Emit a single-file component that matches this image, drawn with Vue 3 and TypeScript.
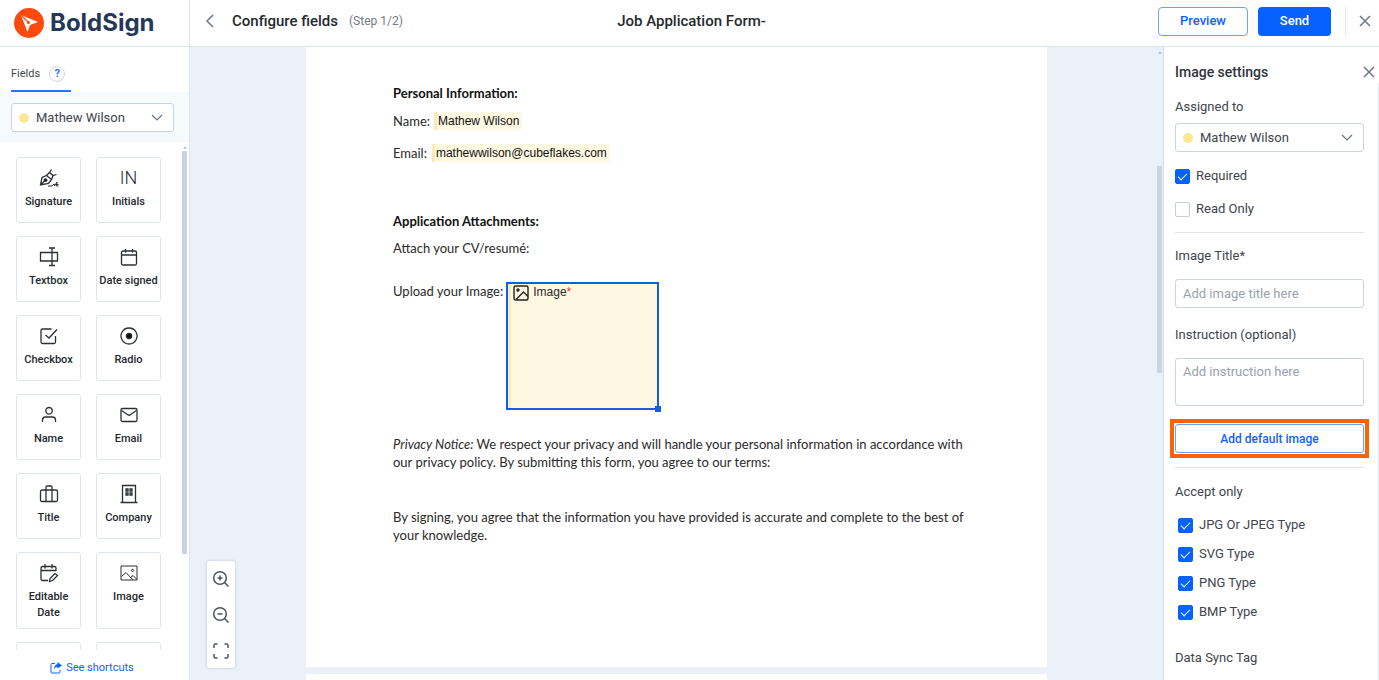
<script setup lang="ts">
import { ref } from 'vue'

type Shape = { d: string; fill?: boolean; thin?: boolean }
interface FieldItem {
  label: string
  shapes: Shape[]
  text?: string
}

const fields: FieldItem[] = [
  {
    label: 'Signature',
    shapes: [
      { d: 'M1.500 17 3 9.500 7.500 7.500 12.500 11.500 9.500 15.500ZM1.500 17 6 12.500' },
      { d: 'M7.500 7.500 10.500 4.500 14 7.500 17.500 6.500M12.500 11.500 14 7.500M10.500 4.500 12.500 1.500' },
      { d: 'M6.500 10.800a1.300 1.300 0 1 0 .1 0Z', fill: true },
      { d: 'M9 18H13L15 16 15.500 18 18 14 17.500 18H19.500M16 16.500H19.500', thin: true },
    ],
  },
  { label: 'Initials', shapes: [], text: 'IN' },
  {
    label: 'Textbox',
    shapes: [{ d: 'M1.500 5.500H18.500V14H1.500Z' }, { d: 'M10 1H16M13 1V18.500M10 18.500H16' }],
  },
  {
    label: 'Date signed',
    shapes: [{ d: 'M4 4H16a1.500 1.500 0 0 1 1.500 1.500V16.500a1.500 1.500 0 0 1-1.500 1.500H4a1.500 1.500 0 0 1-1.500-1.500V5.500A1.500 1.500 0 0 1 4 4Z' }, { d: 'M2.500 8H17.500M6.500 2V5.500M13.500 2V5.500' }],
  },
  {
    label: 'Checkbox',
    shapes: [{ d: 'M12.500 3H3.500A1.500 1.500 0 0 0 2 4.500V16a1.500 1.500 0 0 0 1.500 1.500H15a1.500 1.500 0 0 0 1.500-1.500V10' }, { d: 'M6.500 9 10 12 18 3.500' }],
  },
  {
    label: 'Radio',
    shapes: [{ d: 'M10 2a8 8 0 1 0 .1 0Z' }, { d: 'M10 7.300a2.700 2.700 0 1 0 .1 0Z', fill: true }],
  },
  {
    label: 'Name',
    shapes: [{ d: 'M10 2.500a3.300 3.300 0 1 0 .1 0Z' }, { d: 'M3.500 17V15a3 3 0 0 1 3-3H13.500a3 3 0 0 1 3 3V17' }],
  },
  {
    label: 'Email',
    shapes: [{ d: 'M3.500 3.500H16.500A1.500 1.500 0 0 1 18 5V15A1.500 1.500 0 0 1 16.500 16.500H3.500A1.500 1.500 0 0 1 2 15V5A1.500 1.500 0 0 1 3.500 3.500Z' }, { d: 'M2.500 5.500 10 10.500 17.500 5.500' }],
  },
  {
    label: 'Title',
    shapes: [{ d: 'M3 6H17A1.500 1.500 0 0 1 18.500 7.500V16A1.500 1.500 0 0 1 17 17.500H3A1.500 1.500 0 0 1 1.500 16V7.500A1.500 1.500 0 0 1 3 6Z' }, { d: 'M7 17.500V3A1 1 0 0 1 8 2H12A1 1 0 0 1 13 3V17.500' }],
  },
  {
    label: 'Company',
    shapes: [{ d: 'M3.500 18V1.500H16.500V18M1.500 18.500H18.500' }, { d: 'M7 5H9V7H7ZM11 5H13V7H11ZM7 9H9V11H7ZM11 9H13V11H11Z' }],
  },
  {
    label: 'Editable Date',
    shapes: [{ d: 'M9 17.500H3.500A1.500 1.500 0 0 1 2 16V5A1.500 1.500 0 0 1 3.500 3.500H15.500A1.500 1.500 0 0 1 17 5V8M2 7.500H17M6 1V5.500M13 1V5.500' }, { d: 'M10.500 18.500 11 15.500 16 10.500 18.500 12.500 13.500 17.500Z' }],
  },
  {
    label: 'Image',
    shapes: [{ d: 'M2 3H18V17H2ZM2.500 13.500 7 9.500 14 17M11.500 14.500 14 12.500 18 16.500', thin: true }, { d: 'M13.500 6.200a1.200 1.200 0 1 0 .1 0Z', thin: true }],
  },
]

const signers = ['Mathew Wilson']
const fieldSigner = ref(signers[0])
const assignee = ref(signers[0])
const required = ref(true)
const readOnly = ref(false)
const imageTitle = ref('')
const instruction = ref('')
const types = ref([
  { id: 'jpg', label: 'JPG Or JPEG Type', on: true },
  { id: 'svg', label: 'SVG Type', on: true },
  { id: 'png', label: 'PNG Type', on: true },
  { id: 'bmp', label: 'BMP Type', on: true },
])
</script>

<template>
  <div class="app">
    <header class="topbar">
      <div class="topbar-left">
        <a class="brand" href="#" aria-label="BoldSign">
          <svg width="32" height="32" viewBox="0 0 32 32" aria-hidden="true">
            <circle cx="16" cy="16" r="15" fill="#ff4a0d" />
            <path d="M8 8 25 15 17 18 14.500 25Z" fill="#fff" />
            <path d="M8 8 15.500 15.500" stroke="#ff4a0d" stroke-width="1.300" />
            <circle cx="15.500" cy="15.500" r="1.500" fill="#ff4a0d" />
          </svg>
          <span>BoldSign</span>
        </a>
        <button class="icon-btn" type="button" aria-label="Back">
          <svg width="12" height="16" viewBox="0 0 12 16"><path d="M9 2 3 8 9 14" /></svg>
        </button>
        <h1>Configure fields</h1>
        <span class="step">(Step 1/2)</span>
      </div>
      <div class="doc-name">Job Application Form-</div>
      <div class="topbar-right">
        <button class="btn outline" type="button">Preview</button>
        <button class="btn solid" type="button">Send</button>
        <span class="divider"></span>
        <button class="icon-btn" type="button" aria-label="Close">
          <svg width="14" height="14" viewBox="0 0 14 14"><path d="M2 2 12 12M12 2 2 12" /></svg>
        </button>
      </div>
    </header>

    <div class="body">
      <aside class="sidebar">
        <div class="tabs">
          <div class="tab">
            Fields
            <button class="help" type="button" aria-label="Help">?</button>
          </div>
        </div>
        <div class="signer">
          <div class="picker">
            <i class="dot"></i>
            <select v-model="fieldSigner" aria-label="Signer">
              <option v-for="s in signers" :key="s">{{ s }}</option>
            </select>
            <svg class="chev" width="12" height="8" viewBox="0 0 12 8"><path d="M1 1 6 6 11 1" /></svg>
          </div>
        </div>
        <div class="palette">
          <div class="cards">
            <button v-for="f in fields" :key="f.label" class="card" type="button">
              <span v-if="f.text" class="glyph">{{ f.text }}</span>
              <svg v-else width="20" height="20" viewBox="0 0 20 20" aria-hidden="true">
                <path v-for="(s, i) in f.shapes" :key="i" :d="s.d" :class="{ filled: s.fill, thin: s.thin }" />
              </svg>
              <span class="card-label">{{ f.label }}</span>
            </button>
            <div v-for="n in 2" :key="n" class="card"></div>
          </div>
          <div class="rail">
            <i class="arrow"></i>
            <i class="thumb"></i>
          </div>
        </div>
        <a class="shortcuts" href="#">
          <svg width="12" height="12" viewBox="0 0 12 12" aria-hidden="true">
            <path d="M5 1.500H2A1 1 0 0 0 1 2.500V10A1 1 0 0 0 2 11H9A1 1 0 0 0 10 10V8" fill="none" stroke="#0f62fe" />
            <path d="M7.500 0 12 3.500 7.500 6.500V4.800Q5 5 4 7.500 4 3 7.500 2Z" fill="#0f62fe" />
          </svg>
          See shortcuts
        </a>
      </aside>

      <main class="canvas">
        <div class="tools">
          <button type="button" aria-label="Zoom in">
            <svg width="18" height="18" viewBox="0 0 18 18"><circle cx="8" cy="8" r="6.300" /><path d="M12.500 12.500 16.500 16.500M5.500 8H10.500M8 5.500V10.500" /></svg>
          </button>
          <button type="button" aria-label="Zoom out">
            <svg width="18" height="18" viewBox="0 0 18 18"><circle cx="8" cy="8" r="6.300" /><path d="M12.500 12.500 16.500 16.500M5.500 8H10.500" /></svg>
          </button>
          <button type="button" aria-label="Fit to screen">
            <svg width="18" height="18" viewBox="0 0 18 18"><path d="M2 6V3.500A1.500 1.500 0 0 1 3.500 2H5.500M12.500 2H14.500A1.500 1.500 0 0 1 16 3.500V6M16 12V14.500A1.500 1.500 0 0 1 14.500 16H12.500M5.500 16H3.500A1.500 1.500 0 0 1 2 14.500V12" /></svg>
          </button>
        </div>
        <div class="pages">
          <article class="page first">
            <h2>Personal Information:</h2>
            <p class="row name"><span>Name:</span><span class="filled-field">Mathew Wilson</span></p>
            <p class="row email"><span>Email:</span><span class="filled-field">mathewwilson@cubeflakes.com</span></p>
            <h2 class="attachments">Application Attachments:</h2>
            <p class="attach">Attach your CV/resumé:</p>
            <div class="row upload">
              <span>Upload your Image:</span>
              <div class="image-field">
                <svg width="16" height="16" viewBox="0 0 16 16" aria-hidden="true">
                  <rect x="1" y="1" width="14" height="14" rx="1.500" />
                  <path d="M3 14.500 10.500 7 15 11.500" />
                  <circle cx="5" cy="5" r="1" />
                </svg>
                <span>Image<b>*</b></span>
                <i class="handle"></i>
              </div>
            </div>
            <p class="notice">
              <em>Privacy Notice:</em> We respect your privacy and will handle your personal information in accordance with<br />our
              privacy policy. By submitting this form, you agree to our terms:
            </p>
            <p class="signing">
              By signing, you agree that the information you have provided is accurate and complete to the best of<br />your
              knowledge.
            </p>
          </article>
          <article class="page next"></article>
        </div>
        <div class="rail main-rail">
          <i class="arrow"></i>
          <i class="thumb"></i>
        </div>
      </main>

      <aside class="settings">
        <div class="settings-head">
          <h2>Image settings</h2>
          <button class="icon-btn" type="button" aria-label="Close settings">
            <svg width="14" height="14" viewBox="0 0 14 14"><path d="M2 2 12 12M12 2 2 12" /></svg>
          </button>
        </div>
        <div class="settings-body">
          <label class="caption" for="assignee">Assigned to</label>
          <div class="picker">
            <i class="dot"></i>
            <select id="assignee" v-model="assignee">
              <option v-for="s in signers" :key="s">{{ s }}</option>
            </select>
            <svg class="chev" width="12" height="8" viewBox="0 0 12 8"><path d="M1 1 6 6 11 1" /></svg>
          </div>
          <div class="flags">
            <label class="check"><input v-model="required" type="checkbox" />Required</label>
            <label class="check"><input v-model="readOnly" type="checkbox" />Read Only</label>
          </div>
          <hr />
          <label class="caption" for="image-title">Image Title*</label>
          <input id="image-title" v-model="imageTitle" class="box" type="text" placeholder="Add image title here" />
          <label class="caption" for="instruction">Instruction (optional)</label>
          <textarea id="instruction" v-model="instruction" class="box area" placeholder="Add instruction here"></textarea>
          <div class="highlight">
            <button class="add-image" type="button">Add default image</button>
          </div>
          <hr />
          <div class="caption accept">Accept only</div>
          <div class="types">
            <label v-for="t in types" :key="t.id" class="check"><input v-model="t.on" type="checkbox" />{{ t.label }}</label>
          </div>
          <div class="caption sync">Data Sync Tag</div>
        </div>
      </aside>
    </div>
  </div>
</template>

<style>
body {
  margin: 0;
}
</style>

<style scoped>
* {
  box-sizing: border-box;
}
.app {
  height: 100vh;
  display: flex;
  flex-direction: column;
  overflow: hidden;
  font: 13px/18px Roboto, "Liberation Sans", sans-serif;
  color: #40454f;
  background: #fff;
}
h1, h2, p {
  margin: 0;
}
button, input, select, textarea {
  font: inherit;
  color: inherit;
}
button {
  cursor: pointer;
  padding: 0;
  border: 0;
  background: none;
}
svg {
  display: block;
  flex: none;
}

.topbar {
  flex: none;
  display: grid;
  grid-template-columns: 1fr auto 1fr;
  align-items: center;
  height: 47px;
  border-bottom: 1px solid #dfe5ec;
}
.topbar-left {
  display: flex;
  align-items: center;
  align-self: stretch;
  padding-bottom: 4px;
}
.brand {
  display: flex;
  align-items: center;
  gap: 5px;
  flex: none;
  width: 190px;
  height: 46px;
  margin-bottom: -4px;
  padding-left: 13px;
  border-right: 1px solid #dfe5ec;
  color: #253858;
  font: 700 24px/32px Inter, "Open Sans", sans-serif;
  text-decoration: none;
}
.icon-btn svg {
  fill: none;
  stroke: #6b7890;
  stroke-width: 1.500;
}
.topbar-left .icon-btn {
  margin-left: 14px;
}
h1 {
  margin-left: 16px;
  font-size: 15px;
  font-weight: 500;
  line-height: 20px;
  color: #24292f;
}
.step {
  margin-left: 11px;
  font-size: 12px;
  color: #757b85;
}
.doc-name {
  padding: 0 0 4px 4px;
  font-size: 15px;
  font-weight: 500;
  line-height: 20px;
  color: #24292f;
}
.topbar-right {
  display: flex;
  align-items: center;
  justify-content: flex-end;
  padding: 0 7px 4px 0;
}
.btn {
  height: 29px;
  border-radius: 4px;
  font-weight: 500;
  font-size: 13px;
}
.btn.outline {
  width: 90px;
  border: 1px solid #6c9ff8;
  color: #0f62fe;
}
.btn.solid {
  width: 73px;
  margin-left: 10px;
  background: #0562ff;
  color: #fff;
}
.divider {
  width: 1px;
  height: 28px;
  margin: 0 12px 0 14px;
  background: #dfe5ec;
}

.body {
  flex: 1;
  min-height: 0;
  display: flex;
}
.sidebar {
  flex: none;
  width: 190px;
  display: flex;
  flex-direction: column;
  border-right: 1px solid #dfe5ec;
}
.tabs {
  height: 45px;
  padding: 0 11px;
  display: flex;
}
.tab {
  display: flex;
  align-items: center;
  gap: 9px;
  width: 60px;
  padding-top: 10px;
  border-bottom: 2px solid #2b72f5;
  font-size: 11px;
}
.help {
  flex: none;
  width: 16px;
  height: 16px;
  border: 1px solid #d5d9df;
  border-radius: 50%;
  color: #1677ff;
  font-size: 11px;
  font-weight: 700;
  line-height: 14px;
}
.signer {
  padding: 11px 15px 10px 11px;
  background: #f6fafd;
}
.picker {
  display: flex;
  align-items: center;
  position: relative;
  height: 29px;
  padding-left: 7px;
  border: 1px solid #cbd3dd;
  border-radius: 3px;
  background: #fff;
}
.dot {
  flex: none;
  width: 10px;
  height: 10px;
  border-radius: 50%;
  background: #fae693;
}
.picker select {
  flex: 1;
  min-width: 0;
  height: 27px;
  padding: 0 24px 0 7px;
  border: 0;
  background: none;
  appearance: none;
}
.chev {
  position: absolute;
  right: 10px;
  fill: none;
  stroke: #6b7280;
  stroke-width: 1.200;
  pointer-events: none;
}
.palette {
  flex: 1;
  min-height: 0;
  display: flex;
  justify-content: space-between;
}
.cards {
  display: grid;
  grid-template-columns: 65px 65px;
  grid-auto-rows: max-content;
  align-content: start;
  gap: 13px 15px;
  padding: 15px 0 0 16px;
  overflow: hidden;
}
.card {
  display: flex;
  flex-direction: column;
  align-items: center;
  min-height: 66px;
  padding: 10px 0 7px;
  border: 1px solid #dfe5ec;
  border-radius: 3px;
  color: #24292f;
}
.card svg {
  fill: none;
  stroke: #2b2f36;
  stroke-width: 1.300;
}
.card .filled {
  fill: #111;
}
.card .thin {
  stroke-width: 1;
}
.glyph {
  font-size: 18px;
  font-weight: 300;
  line-height: 20px;
}
.card-label {
  margin-top: 6px;
  padding: 0 2px;
  font-size: 11px;
  font-weight: 500;
  line-height: 16px;
}
.rail {
  flex: none;
  display: flex;
  flex-direction: column;
  align-items: center;
  width: 7px;
  padding-top: 4px;
}
.arrow {
  flex: none;
  border: solid transparent;
  border-width: 0 2px 3px;
  border-bottom-color: #bcc6d1;
}
.thumb {
  width: 5px;
  background: #c9d4df;
}
.palette .rail {
  margin-right: 1px;
}
.palette .thumb {
  height: 80%;
  margin-top: 2px;
}
.shortcuts {
  flex: none;
  display: flex;
  align-items: center;
  justify-content: center;
  gap: 4px;
  height: 30px;
  padding: 6px 5px 0 0;
  color: #0f62fe;
  font-size: 11px;
  text-decoration: none;
}

.canvas {
  flex: 1;
  min-width: 0;
  display: flex;
  position: relative;
  background: #ebf0f9;
}
.pages {
  flex: 1;
  min-width: 0;
  display: flex;
  flex-direction: column;
  align-items: center;
  gap: 7px;
  overflow: hidden;
  padding-left: 7px;
}
.page {
  flex: none;
  width: 100%;
  max-width: 741px;
  background: #fff;
}
.page.first {
  padding: 37px 87px 123px;
  white-space: nowrap;
  font: 13px/18px Lato, "Open Sans", sans-serif;
  color: #2a2a2a;
}
.page.next {
  height: 100px;
}
.page h2 {
  font-size: 13px;
  line-height: 18px;
  font-weight: 700;
  color: #111;
}
.row {
  display: flex;
  align-items: flex-start;
}
.name {
  margin-top: 10px;
  gap: 4px;
}
.email {
  margin-top: 14px;
  gap: 5px;
}
.filled-field {
  padding: 0 3px 0 1px;
  border-left: 3px solid #fcebb3;
  background: #fef8e2;
  color: #111;
  font: 12px/18px "Liberation Sans", Arial, sans-serif;
}
.attachments {
  margin-top: 50px;
}
.attach {
  margin-top: 9px;
}
.upload {
  margin-top: 25px;
  gap: 3px;
}
.image-field {
  position: relative;
  display: flex;
  align-items: flex-start;
  gap: 4px;
  width: 153px;
  height: 128px;
  padding: 1px 2px;
  border: 2px solid #0f5fe8;
  background: linear-gradient(90deg, #fcebb3 3px, #fef8e2 3px);
  font: 12px/14px "Liberation Sans", Arial, sans-serif;
}
.image-field svg {
  margin-left: 3px;
  fill: none;
  stroke: #222;
  stroke-width: 1.400;
}
.image-field b {
  color: #f33;
  font-weight: 400;
}
.handle {
  position: absolute;
  right: -4px;
  bottom: -4px;
  width: 6px;
  height: 6px;
  background: #0f5fe8;
}
.notice {
  margin-top: 25px;
}
.signing {
  margin-top: 37px;
}
.main-rail .thumb {
  height: 207px;
  margin-top: 112px;
}
.tools {
  position: absolute;
  left: 17px;
  bottom: 12px;
  display: flex;
  flex-direction: column;
  gap: 18px;
  padding: 9px 5px 8px;
  border-radius: 3px;
  background: #fff;
  box-shadow: 0 0 3px #b9c3cf;
}
.tools svg {
  fill: none;
  stroke: #4b5563;
  stroke-width: 1.500;
}

.settings {
  flex: none;
  width: 216px;
  border-left: 1px solid #d5dce8;
}
.settings-head {
  display: flex;
  align-items: center;
  justify-content: space-between;
  height: 36px;
  padding: 14px 3px 0 11px;
}
.settings h2 {
  font-size: 14px;
  font-weight: 500;
  color: #30353d;
}
.settings-body {
  display: flex;
  flex-direction: column;
  padding: 15px 14px 20px 11px;
  border-right: 1px solid #e6eaef;
}
.caption {
  height: 18px;
}
.settings .picker {
  margin-top: 7px;
}
.flags {
  display: flex;
  flex-direction: column;
  gap: 15px;
  margin-top: 15px;
}
.check {
  display: flex;
  align-items: center;
  gap: 6px;
  height: 18px;
}
.check input {
  flex: none;
  display: grid;
  place-items: center;
  width: 15px;
  height: 15px;
  margin: 0;
  border: 1px solid #c5cedb;
  border-radius: 2px;
  appearance: none;
  background: #fff;
}
.check input:checked {
  border-color: #0562ff;
  background: #0562ff;
}
.check input:checked::after {
  content: "";
  width: 8px;
  height: 4px;
  margin-bottom: 2px;
  border: solid #fff;
  border-width: 0 0 1px 1px;
  transform: rotate(-45deg);
}
hr {
  width: 100%;
  height: 1px;
  margin: 14px 0;
  border: 0;
  background: #dfe3e8;
}
.box {
  width: 100%;
  height: 29px;
  margin: 14px 0 18px;
  padding: 0 7px;
  border: 1px solid #cbd3dd;
  border-radius: 3px;
  outline: none;
  resize: none;
  background: #fff;
}
.box::placeholder {
  color: #98a1b0;
}
.box.area {
  height: 48px;
  padding-top: 4px;
}
.highlight {
  display: flex;
  margin: -5px;
  padding: 1px;
  border: 4px solid #ff6200;
}
.add-image {
  flex: 1;
  height: 29px;
  border: 1px solid #6c9ff8;
  border-radius: 3px;
  color: #0f62fe;
  font-weight: 500;
  font-size: 12px;
}
.accept {
  margin-top: 1px;
}
.types {
  display: flex;
  flex-direction: column;
  gap: 11px;
  margin-top: 15px;
  padding-left: 3px;
}
.sync {
  margin-top: 28px;
}
</style>
